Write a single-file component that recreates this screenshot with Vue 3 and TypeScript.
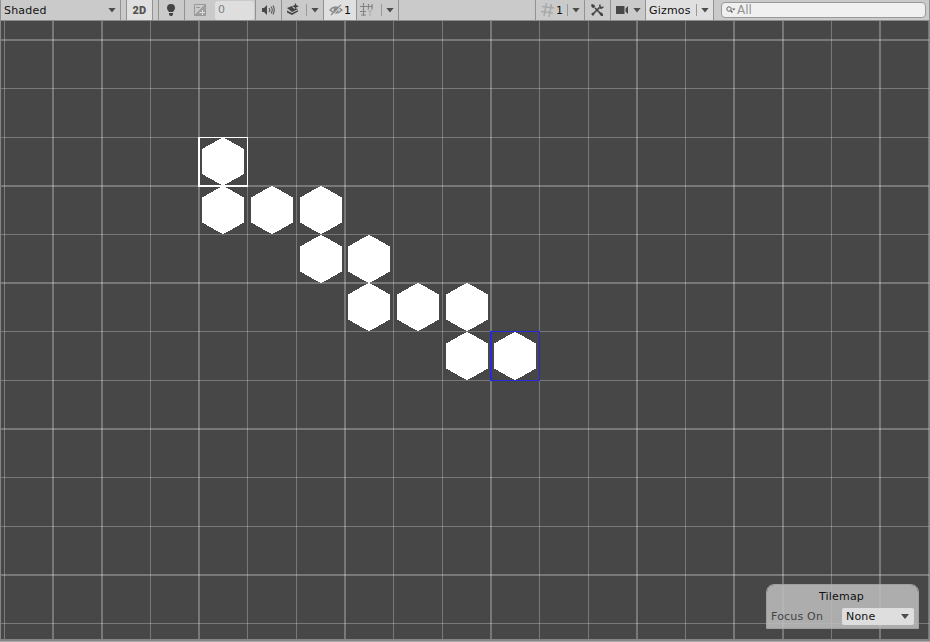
<script setup lang="ts">
interface Line { at: number; size: number }

const columns: Line[] = [
  [4, 1], [52, 2], [101, 2], [150, 1], [198, 2], [247, 1], [296, 1], [344, 2], [393, 1], [442, 1],
  [490, 2], [539, 1], [588, 1], [636, 2], [685, 1], [733, 2], [782, 2], [831, 1], [879, 2], [928, 1],
].map(([at, size]) => ({ at, size }))

const rows: Line[] = [
  [39, 2], [88, 1], [137, 1], [185, 2], [234, 1], [282, 2], [331, 1], [380, 1], [428, 2],
  [477, 1], [526, 1], [574, 2], [623, 1],
].map(([at, size]) => ({ at: at - 21, size }))

const tiles: [number, number][] = [
  [202, 137.5], [202, 186], [251, 186], [300, 186], [300, 235], [348, 235],
  [348, 283], [397, 283], [446, 283], [446, 332], [494, 332],
]

const hexagon = ([x, top]: [number, number]): string => {
  const y = top - 21
  return `${x + 20.5},${y} ${x + 21.5},${y} ${x + 42},${y + 11.5} ${x + 42},${y + 36.5} ${x + 21.5},${y + 48} ${x + 20.5},${y + 48} ${x},${y + 36.5} ${x},${y + 11.5}`
}
</script>

<template>
  <main class="editor">
    <header class="toolbar">
      <div class="cell shading"><span class="label">Shaded</span><i class="arrow"></i></div>
      <div class="cell gap"></div>
      <div class="cell two-d active"><b>2D</b></div>
      <div class="cell gap"></div>
      <div class="cell icon bulb">
        <svg width="12" height="14" viewBox="0 0 12 14"><path d="M6 1a4 4 0 0 0-4 4c0 2 1.400 2.800 2 4h4c.6-1.200 2-2 2-4a4 4 0 0 0-4-4zM4 10h4v1.500L7 13H5l-1-1.500z" fill="#444" /></svg>
      </div>
      <div class="cell exposure">
        <svg width="12" height="12" viewBox="0 0 12 12"><path d="M.5.500h11v11H.5zM1 11 11 1" fill="none" stroke="#999" /><path d="M11 1v10H1z" fill="#999" opacity=".85" /><path d="M2 3.500h4" stroke="#999" /><path d="M5.500 8.500h5.500M8.500 6v5" stroke="#ddd" /></svg>
        <span class="number">0</span>
      </div>
      <div class="cell icon sound">
        <svg width="14" height="12" viewBox="0 0 14 12"><path d="M1 4h2l3-3v10L3 8H1z" fill="#484848" /><path d="M8 4q1.500 2 0 4M10 2.500q2.500 3.500 0 7M12 1.500q2.500 4.500 0 9" fill="none" stroke="#555" stroke-width="1.100" /></svg>
      </div>
      <div class="cell split effects">
        <svg width="14" height="13" viewBox="0 0 14 13"><path d="m1 5 5-2 1 2 2 1 2-.5 1 .5-6 3zM1 7.500l5 2.500 6-3v1.500L6 12 1 9.500z" fill="#444" /><path d="m9.500 0 1 2.300 2.500.9-2.500 1-1 2.300-1-2.300-2.500-1 2.500-.9z" fill="#444" /></svg>
        <i class="bar"></i><i class="arrow"></i>
      </div>
      <div class="cell hidden active">
        <svg width="14" height="12" viewBox="0 0 14 12"><path d="M1 6q5-6 12 0-6 6-12 0zM2 11 12 1" fill="none" stroke="#8a8a8a" stroke-width="1.400" /><ellipse cx="7" cy="6" rx="2.500" ry="2.800" fill="#8a8a8a" /><path d="m4 11 8-9" stroke="#e0e0e0" /></svg>
        <span class="label">1</span>
      </div>
      <div class="cell split grid-axis">
        <svg width="14" height="14" viewBox="0 0 14 14"><path d="M0 3.500h13M3.500 0v13M8.500 1v5M0 8.500h6M12 1v5M1 12h5" fill="none" stroke="#858585" stroke-width="1.200" /><path d="m7.500 6 2.500 3v4m0-4 2.500-3" fill="none" stroke="#b2b2b2" stroke-width="1.400" /></svg>
        <i class="bar"></i><i class="arrow"></i>
      </div>
      <div class="cell spacer"></div>
      <div class="cell snap">
        <svg width="14" height="14" viewBox="0 0 14 14"><path d="M5.500 0 3 13M10.500 1 8 14M1 3.500l12 1.500M0 8.500l12 1.500" fill="none" stroke="#a9a9a9" stroke-width="1.500" /></svg>
        <span class="label">1</span><i class="bar"></i><i class="arrow"></i>
      </div>
      <div class="cell icon tools">
        <svg width="14" height="14" viewBox="0 0 14 14"><path d="m5 5 6 6M9.500 4.500 3 11" stroke="#444" stroke-width="1.700" /><path d="m1 2 1-1 2.500 1 .5 2-1 1-2-.5zM9 2l1.500-1v2l1.500 1 1.500-1v1.500l-2 1.500-2-.5zM1 11l2-1.500 1.500 1.500L3 13zM10 9.500l1.500 0 1.500 1.500v2h-2L9.500 11z" fill="#444" /></svg>
      </div>
      <div class="cell camera">
        <svg width="13" height="10" viewBox="0 0 13 10"><path d="M0 1h8.500v8H0zM9.500 3.500 12 1v8L9.500 6.500z" fill="#484848" /></svg>
        <i class="arrow"></i>
      </div>
      <div class="cell gizmos active"><span class="label">Gizmos</span><i class="bar"></i><i class="arrow"></i></div>
      <div class="search-area">
        <div class="search">
          <svg width="10" height="8" viewBox="0 0 10 8"><circle cx="3" cy="3" r="2.200" fill="none" stroke="#666" /><path d="m4.500 4.500 2 2" stroke="#555" stroke-width="1.300" /><path d="M6 2.500h3.500L7.800 4.500z" fill="#666" /></svg>
          <span>All</span>
        </div>
      </div>
    </header>

    <section class="scene">
      <svg class="canvas" width="930" height="618" viewBox="0 0 930 618" shape-rendering="crispEdges">
        <g class="grid-lines">
          <rect v-for="c in columns" :key="c.at" :x="c.at" y="0" :width="c.size" height="618" />
          <rect v-for="r in rows" :key="r.at" x="1" :y="r.at" width="928" :height="r.size" />
        </g>
        <polygon v-for="(tile, i) in tiles" :key="i" :points="hexagon(tile)" fill="#fff" />
        <path d="M198 116h50v50h-50zM200 117v47h47v-47z" fill="#fff" fill-rule="evenodd" />
        <path d="M490 310h50v50h-50zM492 311v48h47v-48z" fill="#2828dc" fill-rule="evenodd" />
        <rect x="0" y="0" width="1" height="618" fill="#858585" />
        <rect x="929" y="0" width="1" height="618" fill="#858585" />
      </svg>
      <aside class="overlay">
        <h2>Tilemap</h2>
        <div class="focus-row">
          <span>Focus On</span>
          <div class="select"><span>None</span><i class="arrow"></i></div>
        </div>
      </aside>
    </section>
    <footer class="edge"></footer>
  </main>
</template>

<style>
body { margin: 0; overflow: hidden; }
</style>

<style scoped>
.editor { display: flex; flex-direction: column; width: 930px; height: 642px; background: #474747; color: #111; font: 11px/15px "DejaVu Sans", sans-serif; letter-spacing: .2px; }
.toolbar { display: flex; box-sizing: border-box; height: 21px; background: #cacaca; border-bottom: 1px solid #8c8c8c; }
.cell { display: flex; align-items: center; flex: none; box-sizing: border-box; height: 20px; padding-bottom: 1px; border-right: 1px solid #929292; }
.cell svg, .search svg { flex: none; }
.label { padding-top: 2px; }
.active { background: #e0e0e0; }
.arrow { flex: none; width: 8px; height: 5px; margin-top: 1px; background: #4c4c4a; clip-path: polygon(0 0, 100% 0, 50% 100%); }
.bar { flex: none; width: 1px; height: 12px; margin-top: 1px; background: #999; }
.shading { width: 121px; padding-left: 3px; padding-right: 4px; justify-content: space-between; border-left: 1px solid #929292; }
.gap { width: 6px; }
.two-d { width: 26px; justify-content: center; padding-bottom: 0; color: #555; font: 700 11px Roboto, sans-serif; letter-spacing: .2px; }
.icon { width: 26px; justify-content: center; padding-right: 2px; }
.exposure { width: 71px; padding-left: 9px; gap: 9px; }
.number { width: 36px; height: 19px; padding-left: 3px; margin-bottom: -1px; border-radius: 3px; background: #dedede; color: #808080; line-height: 18px; }
.split { width: 42px; }
.effects { padding-left: 4px; }
.effects .bar { margin-left: 6px; }
.split .arrow, .snap .arrow, .gizmos .arrow { margin-left: 4px; }
.hidden { width: 33px; padding-left: 5px; gap: 1px; }
.grid-axis { padding-left: 3px; }
.grid-axis .bar { margin-left: 7px; }
.spacer { width: 137px; }
.snap { width: 49px; padding-left: 5px; }
.snap .label { width: 9px; margin-left: 1px; }
.snap .bar { margin-left: 2px; }
.camera { width: 35px; padding-left: 5px; }
.camera .arrow { margin-left: 4px; }
.gizmos { width: 68px; padding-left: 3px; }
.gizmos .label { width: 47px; }
.search-area { flex: 1; padding: 2px 3px 2px 7px; border-right: 1px solid #929292; }
.search { display: flex; align-items: center; box-sizing: border-box; height: 16px; padding-left: 4px; gap: 1px; border: 1px solid #999; border-radius: 4px; background: #f0f0f0; color: #929292; letter-spacing: 0; }
.search span { font-size: 12px; padding-top: 1px; }
.scene { position: relative; height: 618px; }
.canvas { display: block; }
.grid-lines { fill: rgba(255, 255, 255, .27); }
.overlay { position: absolute; left: 766px; top: 563px; box-sizing: border-box; width: 153px; height: 45px; padding: 4px; border: 1px solid #a0a0a0; border-radius: 8px 8px 0 0; background: rgba(190, 190, 190, .86); background-clip: padding-box; }
.overlay h2 { margin: 0; padding-right: 2px; font: inherit; text-align: center; line-height: 16px; }
.focus-row { display: flex; align-items: center; justify-content: space-between; margin-top: 2px; height: 18px; color: #444; }
.select { display: flex; align-items: center; justify-content: space-between; box-sizing: border-box; width: 72px; height: 17px; padding: 0 5px 0 4px; border-radius: 2px; background: #dedede; color: #111; }
.edge { box-sizing: border-box; height: 3px; background: #aaa; border-top: 2px solid #858585; }
</style>
